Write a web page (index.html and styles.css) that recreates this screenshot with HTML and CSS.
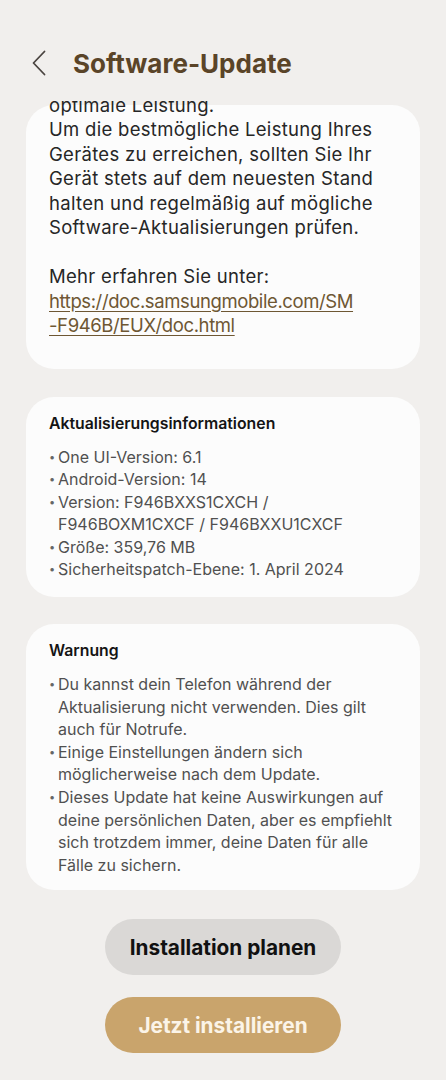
FILE: index.html
```html
<!DOCTYPE html>
<html lang="de">
<head>
    <meta charset="UTF-8">
    <meta name="viewport" content="width=device-width, initial-scale=1.0">
    <title>Software-Update</title>
    <link rel="stylesheet" href="styles.css">
</head>
<body>
    <header class="top-bar">
        <button class="back-button" aria-label="Zurück">
            <svg width="16" height="26" viewBox="0 0 16 26">
                <path d="M13.5 1.5 L2.5 13 L13.5 24.5" fill="none" stroke="#4a4440" stroke-width="1.8" stroke-linecap="round" stroke-linejoin="round"/>
            </svg>
        </button>
        <h1>Software-Update</h1>
    </header>

    <!-- Text line scrolled half out of view -->
    <div class="peek-line"><span>optimale Leistung.</span></div>

    <div class="card notes">
        <p>Um die bestmögliche Leistung Ihres Gerätes zu erreichen, sollten Sie Ihr Gerät stets auf dem neuesten Stand halten und regelmäßig auf mögliche Software-Aktualisierungen prüfen.</p>
        <p class="spacer">Mehr erfahren Sie unter:<br>
            <a href="#">https://doc.samsungmobile.com/SM<br>-F946B/EUX/doc.html</a></p>
    </div>

    <div class="card info">
        <h2>Aktualisierungsinformationen</h2>
        <ul>
            <li>One UI-Version: 6.1</li>
            <li>Android-Version: 14</li>
            <li>Version: F946BXXS1CXCH / F946BOXM1CXCF / F946BXXU1CXCF</li>
            <li>Größe: 359,76 MB</li>
            <li>Sicherheitspatch-Ebene: 1. April 2024</li>
        </ul>
    </div>

    <div class="card info warning">
        <h2>Warnung</h2>
        <ul>
            <li>Du kannst dein Telefon während der Aktualisierung nicht verwenden. Dies gilt auch für Notrufe.</li>
            <li>Einige Einstellungen ändern sich möglicherweise nach dem Update.</li>
            <li>Dieses Update hat keine Auswirkungen auf deine persönlichen Daten, aber es empfiehlt sich trotzdem immer, deine Daten für alle Fälle zu sichern.</li>
        </ul>
    </div>

    <div class="actions">
        <button class="pill-button secondary">Installation planen</button>
        <button class="pill-button primary">Jetzt installieren</button>
    </div>
</body>
</html>
```

FILE: styles.css
```css
body {
    font-family: Inter, "Noto Sans", sans-serif;
    background-color: #f1efed;
    color: #262626;
    margin: 0;
    padding: 0;
}
.top-bar {
    display: flex;
    align-items: center;
    height: 54px;
    margin-top: 36px;
    padding-left: 31px;
}
.back-button {
    background: none;
    border: none;
    padding: 0;
    width: 18px;
    height: 26px;
    display: flex;
    align-items: center;
}
.top-bar h1 {
    margin: 0 0 0 24px;
    font-size: 26px;
    font-weight: 700;
    color: #5a4428;
    letter-spacing: 0;
}
.peek-line {
    position: relative;
    z-index: 1;
    height: 16px;
    margin-top: 11px;
    margin-bottom: -12px;
    padding-left: 49px;
    overflow: hidden;
    display: flex;
    align-items: flex-end;
    font-size: 18.5px;
    letter-spacing: 0.3px;
    line-height: 24.5px;
}
.card {
    background-color: #fcfcfc;
    border-radius: 28px;
    margin: 0 26px;
    padding: 12px 40px 31px 23px;
}
.notes {
    font-size: 18.5px;
    letter-spacing: 0.3px;
    line-height: 24.5px;
}
.notes p {
    margin: 0;
}
.notes .spacer {
    margin-top: 24.5px;
}
.notes a {
    color: #6e5733;
    letter-spacing: -0.4px;
    text-decoration: underline;
    text-underline-offset: 3px;
}
.info {
    margin-top: 28px;
    padding: 16px 20px 16px 23px;
}
.info h2 {
    margin: 0 0 11px;
    font-size: 15.8px;
    line-height: 22px;
    font-weight: 600;
    color: #141414;
}
.info ul {
    list-style: none;
    margin: 0;
    padding: 0;
}
.info li {
    position: relative;
    padding-left: 9px;
    font-size: 16px;
    line-height: 22.6px;
    color: #505050;
}
.info li::before {
    content: "\2022";
    position: absolute;
    left: 0;
    top: 0;
    font-size: 11px;
    color: #666;
}
.warning {
    margin-top: 27px;
    padding-bottom: 14px;
}
.actions {
    display: flex;
    flex-direction: column;
    align-items: center;
    gap: 22px;
    margin-top: 29px;
}
.pill-button {
    width: 236px;
    height: 56px;
    border: none;
    border-radius: 28px;
    font-family: Inter, "Noto Sans", sans-serif;
    font-size: 20.8px;
    font-weight: 700;
}
.secondary {
    background-color: #dad8d6;
    color: #111;
}
.primary {
    background-color: #c9a46c;
    color: #fbf4e8;
}
```
